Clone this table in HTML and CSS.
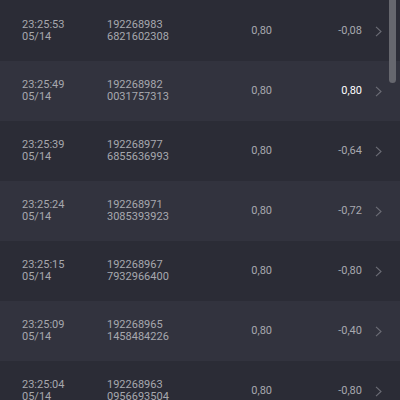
FILE: index.html
```html
<!DOCTYPE html>
<html>
<head>
<meta charset="utf-8">
<link rel="stylesheet" href="styles.css">
</head>
<body>
<div class="list">
  <div class="row">
    <div class="stack"><span>23:25:53</span><span>05/14</span></div>
    <div class="stack"><span>192268983</span><span>6821602308</span></div>
    <div class="num">0,80</div>
    <div class="num">-0,08</div>
    <div class="chev"><svg width="7" height="11" viewBox="0 0 7 11"><polyline points="1,0.8 6,5.5 1,10.2" /></svg></div>
  </div>
  <div class="row">
    <div class="stack"><span>23:25:49</span><span>05/14</span></div>
    <div class="stack"><span>192268982</span><span>0031757313</span></div>
    <div class="num">0,80</div>
    <div class="num hi">0,80</div>
    <div class="chev"><svg width="7" height="11" viewBox="0 0 7 11"><polyline points="1,0.8 6,5.5 1,10.2" /></svg></div>
  </div>
  <div class="row">
    <div class="stack"><span>23:25:39</span><span>05/14</span></div>
    <div class="stack"><span>192268977</span><span>6855636993</span></div>
    <div class="num">0,80</div>
    <div class="num">-0,64</div>
    <div class="chev"><svg width="7" height="11" viewBox="0 0 7 11"><polyline points="1,0.8 6,5.5 1,10.2" /></svg></div>
  </div>
  <div class="row">
    <div class="stack"><span>23:25:24</span><span>05/14</span></div>
    <div class="stack"><span>192268971</span><span>3085393923</span></div>
    <div class="num">0,80</div>
    <div class="num">-0,72</div>
    <div class="chev"><svg width="7" height="11" viewBox="0 0 7 11"><polyline points="1,0.8 6,5.5 1,10.2" /></svg></div>
  </div>
  <div class="row">
    <div class="stack"><span>23:25:15</span><span>05/14</span></div>
    <div class="stack"><span>192268967</span><span>7932966400</span></div>
    <div class="num">0,80</div>
    <div class="num">-0,80</div>
    <div class="chev"><svg width="7" height="11" viewBox="0 0 7 11"><polyline points="1,0.8 6,5.5 1,10.2" /></svg></div>
  </div>
  <div class="row">
    <div class="stack"><span>23:25:09</span><span>05/14</span></div>
    <div class="stack"><span>192268965</span><span>1458484226</span></div>
    <div class="num">0,80</div>
    <div class="num">-0,40</div>
    <div class="chev"><svg width="7" height="11" viewBox="0 0 7 11"><polyline points="1,0.8 6,5.5 1,10.2" /></svg></div>
  </div>
  <div class="row">
    <div class="stack"><span>23:25:04</span><span>05/14</span></div>
    <div class="stack"><span>192268963</span><span>0956693504</span></div>
    <div class="num">0,80</div>
    <div class="num">-0,80</div>
    <div class="chev"><svg width="7" height="11" viewBox="0 0 7 11"><polyline points="1,0.8 6,5.5 1,10.2" /></svg></div>
  </div>
</div>
<div class="scrollbar"></div>
</body>
</html>
```
FILE: styles.css
```css
html, body {
  margin: 0;
  padding: 0;
  width: 400px;
  height: 400px;
  overflow: hidden;
  background: #2b2c36;
  font-family: Roboto, "Liberation Sans", sans-serif;
}
.list {
  padding-top: 1px;
}
.row {
  height: 60px;
  display: grid;
  grid-template-columns: 85px 93px 72px 90px 38px;
  align-items: center;
  padding-left: 22px;
  background: #2b2c36;
  color: #a7a8ae;
  font-size: 11px;
  line-height: 12px;
}
.row:nth-child(even) {
  background: #32333e;
}
.stack {
  display: flex;
  flex-direction: column;
}
.num {
  text-align: right;
}
.num.hi {
  color: #ffffff;
}
.chev {
  display: flex;
  align-items: center;
  padding-left: 13px;
  height: 11px;
}
.chev polyline {
  fill: none;
  stroke: #6c6d76;
  stroke-width: 1.1;
}
.scrollbar {
  position: absolute;
  top: 0;
  left: 389px;
  width: 7px;
  height: 83px;
  border-radius: 0 0 4px 4px;
  background: #66676e;
}
```
